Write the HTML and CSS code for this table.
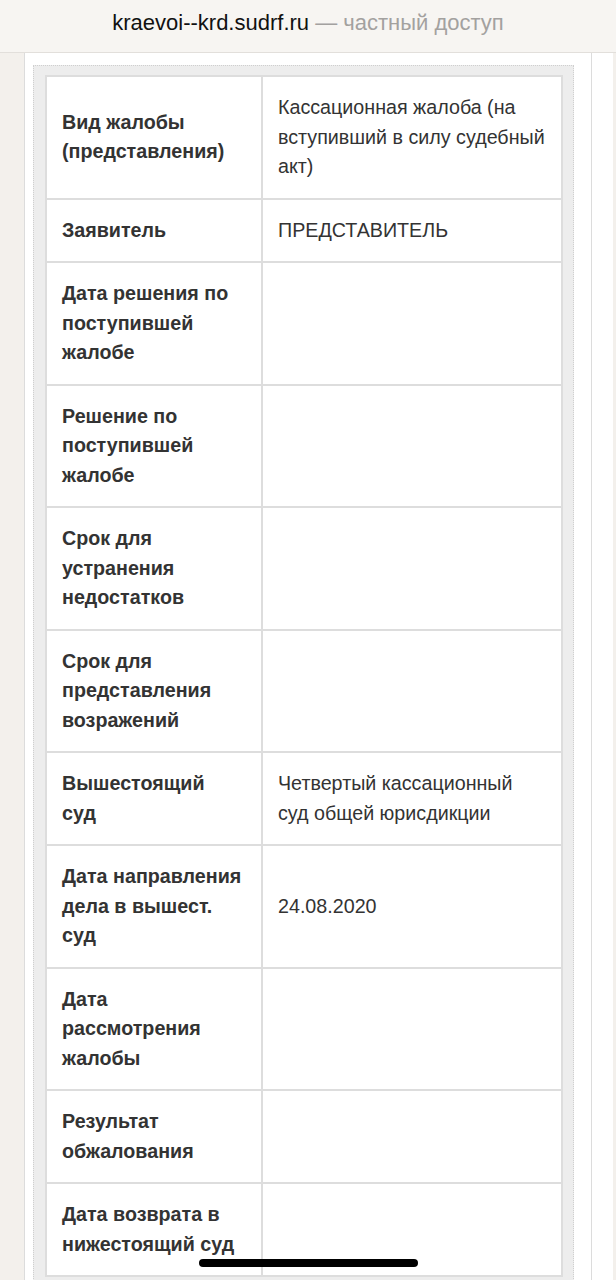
FILE: index.html
```html
<!DOCTYPE html>
<html lang="ru">

<head>
    <meta charset="UTF-8">
    <meta name="viewport" content="width=device-width, initial-scale=1.0">
    <title>kraevoi--krd.sudrf.ru</title>
    <link rel="stylesheet" href="styles.css">
</head>

<body>

    <div class="topbar">
        <span class="host">kraevoi--krd.sudrf.ru</span> <span class="mode">— частный доступ</span>
    </div>

    <div class="page">
        <div class="sheet">
            <div class="frame">
                <table class="caseTable">
                    <tr>
                        <td class="label">Вид жалобы<br>(представления)</td>
                        <td class="value">Кассационная жалоба (на<br>вступивший в силу судебный<br>акт)</td>
                    </tr>
                    <tr>
                        <td class="label">Заявитель</td>
                        <td class="value">ПРЕДСТАВИТЕЛЬ</td>
                    </tr>
                    <tr>
                        <td class="label">Дата решения по<br>поступившей<br>жалобе</td>
                        <td class="value"></td>
                    </tr>
                    <tr>
                        <td class="label">Решение по<br>поступившей<br>жалобе</td>
                        <td class="value"></td>
                    </tr>
                    <tr>
                        <td class="label">Срок для<br>устранения<br>недостатков</td>
                        <td class="value"></td>
                    </tr>
                    <tr>
                        <td class="label">Срок для<br>представления<br>возражений</td>
                        <td class="value"></td>
                    </tr>
                    <tr>
                        <td class="label">Вышестоящий<br>суд</td>
                        <td class="value">Четвертый кассационный<br>суд общей юрисдикции</td>
                    </tr>
                    <tr>
                        <td class="label">Дата направления<br>дела в вышест.<br>суд</td>
                        <td class="value">24.08.2020</td>
                    </tr>
                    <tr>
                        <td class="label">Дата<br>рассмотрения<br>жалобы</td>
                        <td class="value"></td>
                    </tr>
                    <tr>
                        <td class="label">Результат<br>обжалования</td>
                        <td class="value"></td>
                    </tr>
                    <tr>
                        <td class="label">Дата возврата в<br>нижестоящий суд</td>
                        <td class="value"></td>
                    </tr>
                </table>
            </div>
        </div>
        <div class="aside"></div>
    </div>

    <div class="homeBar"></div>

</body>

</html>
```

FILE: styles.css
```css
* {
    box-sizing: border-box;
}

body {
    margin: 0;
    background: #ffffff;
    font-family: "Liberation Sans", Arial, sans-serif;
    color: #333333;
}


.topbar {
    height: 53px;
    padding-top: 10px;
    background: #f7f5f2;
    border-bottom: 1px solid #e2dfdb;
    text-align: center;
    font-size: 22px;
    line-height: 26px;
}

.host {
    color: #111111;
}

.mode {
    color: #a3a19f;
}


.page {
    display: flex;
    background: #f3f0ec;
    padding: 0 3px 0 24px;
}

.sheet {
    width: 568px;
    flex: none;
    background: #ffffff;
    border-left: 1px solid #dcdcdc;
    border-right: 1px solid #dcdcdc;
    padding: 12px 17px 0 8px;
}

.aside {
    flex: 1;
    background: #ffffff;
}

.frame {
    background: #ededed;
    border: 1px dotted #cfcfcf;
    padding: 9px 10px 9px 11px;
}


.caseTable {
    width: 518px;
    border-collapse: collapse;
    background: #ffffff;
    border: 2px solid #dddddd;
    font-size: 19.7px;
    line-height: 29.5px;
}

.caseTable td {
    border: 2px solid #dddddd;
    padding: 16px 12px 16px 15px;
    vertical-align: middle;
    white-space: nowrap;
}

.caseTable .label {
    width: 216px;
    font-weight: bold;
}

.caseTable .value {
    font-weight: normal;
}


.homeBar {
    position: fixed;
    left: 199px;
    bottom: 13px;
    width: 219px;
    height: 8px;
    border-radius: 4px;
    background: #000000;
}
```
